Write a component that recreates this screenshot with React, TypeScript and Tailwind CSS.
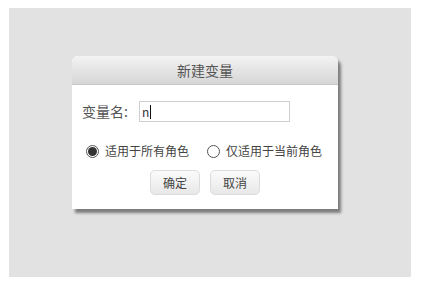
import React from 'react';

const font = { fontFamily: '"Microsoft YaHei", "Noto Sans CJK SC", "Liberation Sans", sans-serif' };

function Radio({ checked }: { checked: boolean }) {
  return (
    <span className="w-[13px] h-[13px] rounded-full border border-[#555] bg-white flex items-center justify-center shrink-0">
      {checked && <span className="w-[9px] h-[9px] rounded-full bg-[#333]" />}
    </span>
  );
}

export default function App() {
  return (
    <div className="w-[422px] h-[284px] bg-white pt-[8px] pl-[9px]" style={font}>
      <div className="w-[402px] h-[269px] bg-[#e2e2e2] pl-[63px] pt-[48px]">
        <div className="w-[266px] h-[153px] bg-white rounded-t-[6px] shadow-[3px_4px_3px_rgba(0,0,0,0.45)] flex flex-col">
          <div className="h-[29px] rounded-t-[6px] bg-gradient-to-b from-[#f3f3f3] to-[#d6d6d6] border-b border-[#c8c8c8] flex items-center justify-center text-[14px] text-[#555]">
            新建变量
          </div>
          <div className="flex items-center pl-[10px] mt-[16px] text-[14px] text-[#555]">
            <span className="w-[57px]">变量名:</span>
            <div className="w-[151px] h-[21px] border border-[#cfcfcf] flex items-center pl-[2px] text-[12px] text-[#333]">
              n<span className="w-px h-[14px] bg-[#111] ml-px" />
            </div>
          </div>
          <div className="flex items-center mt-[20px] pl-[14px] text-[12px] text-[#444]">
            <Radio checked />
            <span className="ml-[6px]">适用于所有角色</span>
            <span className="ml-[18px]"><Radio checked={false} /></span>
            <span className="ml-[6px]">仅适用于当前角色</span>
          </div>
          <div className="flex justify-center gap-[10px] mt-[10px]">
            <button className="w-[50px] h-[25px] rounded-[5px] border border-[#dcdcdc] bg-gradient-to-b from-[#fbfbfb] to-[#e8e8e8] text-[12px] text-[#444]">确定</button>
            <button className="w-[50px] h-[25px] rounded-[5px] border border-[#dcdcdc] bg-gradient-to-b from-[#fbfbfb] to-[#e8e8e8] text-[12px] text-[#444]">取消</button>
          </div>
        </div>
      </div>
    </div>
  );
}
